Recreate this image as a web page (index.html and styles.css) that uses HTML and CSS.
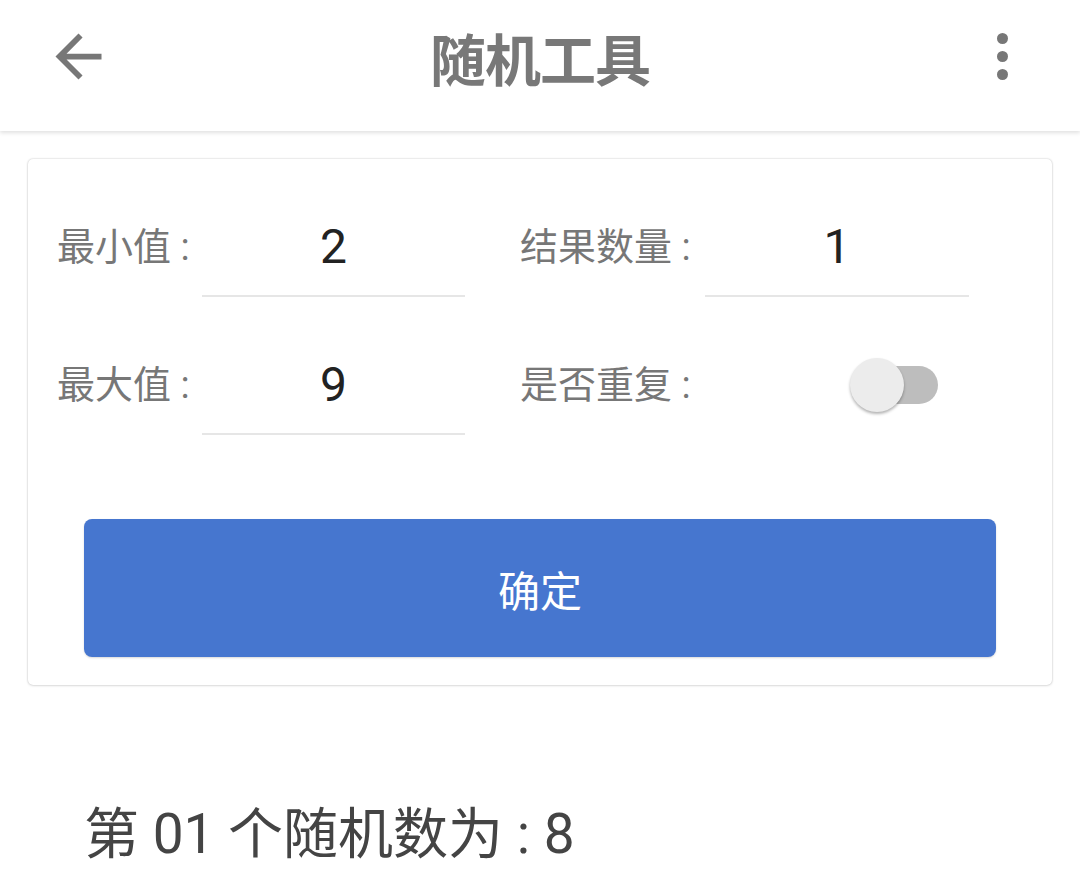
FILE: index.html
```html
<!DOCTYPE html>
<html lang="zh-CN">
<head>
<meta charset="utf-8">
<title>随机工具</title>
<link rel="stylesheet" href="styles.css">
</head>
<body>
<header class="appbar">
  <button class="icon-btn back" aria-label="返回">
    <svg width="69" height="69" viewBox="0 0 24 24"><path d="M20 11H7.83l5.59-5.59L12 4l-8 8 8 8 1.41-1.41L7.83 13H20v-2z" fill="#777"/></svg>
  </button>
  <h1 class="title">随机工具</h1>
  <button class="icon-btn more" aria-label="更多">
    <span class="dot"></span><span class="dot"></span><span class="dot"></span>
  </button>
</header>

<main class="content">
  <section class="card">
    <div class="form">
      <label class="label">最小值 :</label>
      <div class="field">2</div>
      <div class="spacer"></div>
      <label class="label">结果数量 :</label>
      <div class="field">1</div>

      <label class="label">最大值 :</label>
      <div class="field">9</div>
      <div class="spacer"></div>
      <label class="label">是否重复 :</label>
      <div class="switch-cell">
        <span class="switch"><span class="track"></span><span class="thumb"></span></span>
      </div>
    </div>
    <button class="confirm">确定</button>
  </section>

  <p class="result">第 01 个随机数为 : 8</p>
</main>
</body>
</html>
```

FILE: styles.css
```css
* { box-sizing: border-box; }
html, body { margin: 0; padding: 0; background: #fff; }
body {
  font-family: Roboto, "Noto Sans CJK SC", sans-serif;
  width: 1080px;
  height: 895px;
  overflow: hidden;
}
.appbar {
  height: 131px;
  display: grid;
  grid-template-columns: 1fr auto 1fr;
  align-items: center;
  padding: 0 58px;
  background: #fff;
  box-shadow: 0 2px 4px rgba(0,0,0,0.12);
  position: relative;
  z-index: 1;
}
.icon-btn {
  background: none;
  border: 0;
  padding: 0;
  display: flex;
  align-items: center;
  justify-content: center;
}
.back { width: 69px; height: 69px; margin: -18px 0 0 -14px; justify-self: start; }
.title {
  margin: -18px 0 0;
  font-size: 56px;
  font-weight: 700;
  color: #787878;
  letter-spacing: -1px;
}
.more {
  flex-direction: column;
  gap: 7px;
  width: 12px;
  margin: -18px 14px 0 0;
  justify-self: end;
}
.dot {
  width: 11px;
  height: 11px;
  border-radius: 50%;
  background: #777;
}
.content { padding: 28px 28px 0; }
.card {
  border-radius: 5px;
  box-shadow: 0 0 2px rgba(0,0,0,0.25), 0 1px 3px rgba(0,0,0,0.08);
  padding: 38px 56px 28px;
}
.form {
  display: grid;
  grid-template-columns: 145px 263px 55px 185px 264px;
  grid-auto-rows: 100px;
  row-gap: 38px;
  margin-left: -27px;
}
.label {
  display: flex;
  align-items: center;
  font-size: 38px;
  color: #777;
  padding-bottom: 8px;
  white-space: nowrap;
}
.field {
  display: flex;
  align-items: center;
  justify-content: center;
  font-size: 48px;
  color: #222;
  border-bottom: 2px solid #e6e6e6;
}
.switch-cell {
  display: flex;
  align-items: center;
  justify-content: flex-end;
  padding-right: 31px;
}
.switch {
  position: relative;
  width: 88px;
  height: 56px;
  display: block;
}
.track {
  position: absolute;
  left: 19px;
  right: 0;
  top: 9px;
  height: 38px;
  border-radius: 19px;
  background: #bdbdbd;
}
.thumb {
  position: absolute;
  left: 0;
  top: 1px;
  width: 54px;
  height: 54px;
  border-radius: 50%;
  background: #ececec;
  box-shadow: 0 2px 3px rgba(0,0,0,0.3);
}
.confirm {
  display: block;
  width: 100%;
  height: 138px;
  margin-top: 84px;
  border: 0;
  border-radius: 8px;
  background: #4676cf;
  color: #fff;
  font-family: "Noto Sans CJK SC", sans-serif;
  font-size: 42px;
  box-shadow: 0 1px 2px rgba(0,0,0,0.15);
}
.result {
  margin: 116px 0 0 56px;
  font-size: 55px;
  color: #444;
  line-height: 1.2;
}
```
